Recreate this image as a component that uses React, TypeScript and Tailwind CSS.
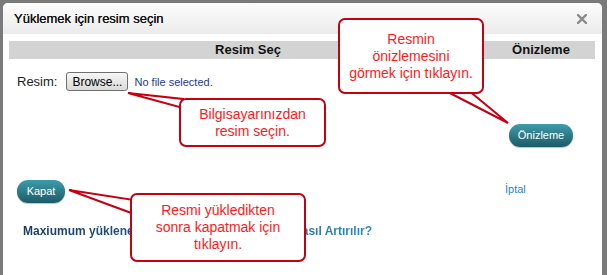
import React from 'react';

const Callout = ({ className, lines }: { className: string; lines: string[] }) => (
  <div
    className={`absolute bg-white border-2 border-[#c40012] rounded-[7px] flex flex-col items-center justify-center text-[#ff1a1a] text-[14px] leading-[17px] text-center ${className}`}
  >
    {lines.map((l) => (
      <span key={l}>{l}</span>
    ))}
  </div>
);

const TealButton = ({ label, className }: { label: string; className: string }) => (
  <button
    className={`h-[23px] rounded-[11px] bg-linear-to-b from-[#3f9cab] to-[#1c5b68] text-white text-[11px] shadow-[0_1px_1px_rgba(0,0,0,0.25)] ${className}`}
  >
    {label}
  </button>
);

export default function App() {
  return (
    <div className="relative w-[607px] h-[275px] overflow-hidden bg-[#7a7a7a] pt-[3px] pl-[3px] pr-[5px] font-['Liberation_Sans',Arial,sans-serif]">
      <div className="h-full bg-white rounded-t-[5px] flex flex-col">
        {/* header */}
        <div className="h-[31px] shrink-0 rounded-t-[5px] bg-linear-to-b from-[#fcfcfc] to-[#ebebeb] flex items-center justify-between pl-[11px] pr-[15px]">
          <span className="text-[13px] text-[#111] [text-shadow:0_0_0.5px_#111]">Yüklemek için resim seçin</span>
          <svg width="10" height="10" viewBox="0 0 10 10">
            <path d="M1 1 L9 9 M9 1 L1 9" stroke="#8a8a8a" strokeWidth="2.4" strokeLinecap="square" />
          </svg>
        </div>

        <div className="pl-[6px] pr-[7px] pt-[7px]">
          <div className="grid grid-cols-[478px_108px]">
            <div className="h-[18px] bg-[#d3d3d3] flex items-center justify-center text-[13px] font-bold text-[#111]">
              Resim Seç
            </div>
            <div className="h-[18px] bg-[#d3d3d3] flex items-center justify-center text-[13px] font-bold text-[#111]">
              Önizleme
            </div>

            <div className="h-[101px] pt-[13px] pl-[8px]">
              <div className="flex items-center">
                <span className="text-[13px] text-[#222] mr-[9px]">Resim:</span>
                <button className="w-[62px] h-[19px] rounded-[3px] border border-[#707070] bg-linear-to-b from-[#f6f6f6] to-[#dadada] text-[12px] text-black leading-none">
                  Browse...
                </button>
                <span className="ml-[6px] text-[11px] text-[#203c8c]">No file selected.</span>
              </div>
            </div>
            <div className="h-[101px] pt-[65px] flex justify-center">
              <TealButton label="Önizleme" className="w-[64px]" />
            </div>

            <div className="pt-[18px] pl-[8px]">
              <TealButton label="Kapat" className="w-[48px]" />
            </div>
            <div className="pt-[23px] pl-[18px] text-[11px] leading-[13px] text-[#1f87c6]">İptal</div>
          </div>

          <div className="mt-[21px] pl-[14px] text-[12px] leading-[14px] font-bold">
            <span className="bg-linear-to-r from-[#1b3866] to-[#2a88bb] bg-clip-text text-transparent">
              Maxiumum yüklenebilecek resim dosya boyutu nasıl Artırılır?
            </span>
          </div>
        </div>
      </div>

      {/* callout tails */}
      <svg className="absolute inset-0 pointer-events-none" width="607" height="275">
        <polygon points="128,93 183,99 183,108" fill="#fff" stroke="#c40012" strokeWidth="2" strokeLinejoin="miter" />
        <polygon points="508,123 444,90 468,90" fill="#fff" stroke="#c40012" strokeWidth="2" strokeLinejoin="miter" />
        <polygon points="69,190 134,200 134,214" fill="#fff" stroke="#c40012" strokeWidth="2" strokeLinejoin="miter" />
      </svg>

      <Callout className="left-[179px] top-[98px] w-[147px] h-[49px]" lines={['Bilgisayarınızdan', 'resim seçin.']} />
      <Callout
        className="left-[338px] top-[18px] w-[146px] h-[76px]"
        lines={['Resmin', 'önizlemesini', 'görmek için tıklayın.']}
      />
      <Callout
        className="left-[130px] top-[193px] w-[176px] h-[69px]"
        lines={['Resmi yükledikten', 'sonra kapatmak için', 'tıklayın.']}
      />
    </div>
  );
}
